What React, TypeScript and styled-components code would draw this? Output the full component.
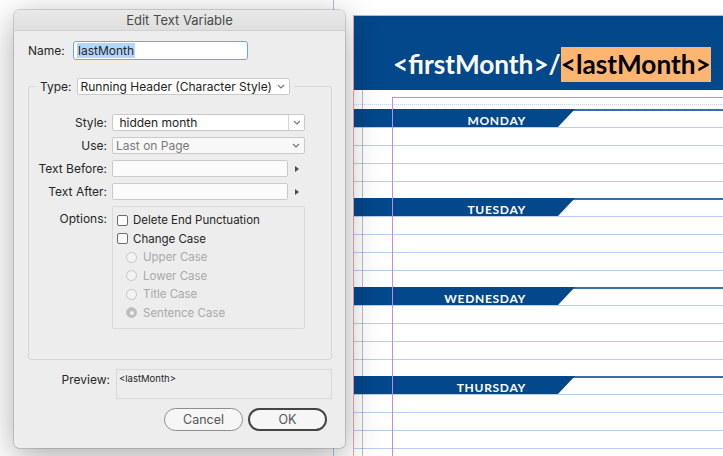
import React from 'react';
import styled, { createGlobalStyle, css } from 'styled-components';

const GlobalStyle = createGlobalStyle`
  html, body {
    margin: 0;
    padding: 0;
    background: #fff;
    overflow: hidden;
  }
  * {
    box-sizing: border-box;
  }
`;

const uiFont = `Inter, "Noto Sans", sans-serif`;
const docFont = `Lato, "Open Sans", sans-serif`;
const navy = '#03488b';

const Screen = styled.div`
  position: relative;
  width: 723px;
  height: 456px;
  overflow: hidden;
  background: #fff;
`;

/* ---------- document canvas ---------- */

const Pasteboard = styled.div`
  width: 100%;
  height: 100%;
  padding: 15px 0 0 353px;
`;

const Page = styled.div`
  width: 380px;
  height: 441px;
  border-top: 1px solid #f0a4b0;
  border-left: 1px solid #f0a4b0;
  background: #fff;
  font-family: ${docFont};
`;

const Header = styled.div`
  height: 74px;
  background: ${navy};
  display: flex;
  align-items: flex-end;
  padding: 0 0 8px 39px;
`;

const Title = styled.div`
  font-size: 26.2px;
  font-weight: 700;
  line-height: 35px;
  color: #fff;
  white-space: nowrap;
`;

const Highlight = styled.span`
  display: inline-block;
  background: #fdb671;
  color: #000;
`;

const Spacer = styled.div`
  height: 15px;
  margin-bottom: 4px;
  border-bottom: 1px dotted #c5d3ea;
`;

const DayBlock = styled.div`
  display: flex;
  flex-direction: column;
`;

const DayBar = styled.div`
  height: 19px;
  border-bottom: 1px solid #b9cdee;
  background: linear-gradient(#3a6cae, #3a6cae) top / 100% 2px no-repeat;
`;

const DayTab = styled.div`
  width: 221px;
  height: 18px;
  background: ${navy};
  clip-path: polygon(0 0, 100% 0, calc(100% - 17px) 100%, 0 100%);
  padding-right: 49px;
  text-align: right;
`;

const DayLabel = styled.span<{ $flagged?: boolean }>`
  font-size: 12px;
  font-weight: 700;
  letter-spacing: 0.7px;
  line-height: 17px;
  color: #fff;
  ${(p) =>
    p.$flagged &&
    css`
      text-decoration: underline;
      text-decoration-color: #d2263c;
      text-decoration-thickness: 1px;
      text-underline-offset: 2px;
    `}
`;

const Rule = styled.div<{ $last?: boolean }>`
  height: ${(p) => (p.$last ? '16px' : '18px')};
  border-bottom: ${(p) => (p.$last ? 'none' : '1px solid #b9cdee')};
`;

/* guides drawn over the layout */

const Guide = styled.div<{ $color: string }>`
  position: absolute;
  pointer-events: none;
  border: 0 solid ${(p) => p.$color};
`;

const MarginGuide = styled(Guide)`
  left: 362px;
  top: 23px;
  right: -20px;
  bottom: -20px;
  border-width: 1px 0 0 1px;
`;

const FrameGuide = styled(Guide)`
  left: 392px;
  top: 97px;
  right: -20px;
  bottom: -20px;
  border-width: 1px 0 0 1px;
`;

const ColumnGuide = styled(Guide)`
  left: 333px;
  top: 0;
  bottom: 0;
  border-width: 0 0 0 1px;
`;

/* ---------- dialog ---------- */

const Dialog = styled.div`
  position: absolute;
  left: 14px;
  top: 10px;
  width: 331px;
  height: 438px;
  background: #ededed;
  border-radius: 5px;
  box-shadow: 0 0 0 0.5px rgba(0, 0, 0, 0.28), 0 8px 34px rgba(0, 0, 0, 0.34);
  display: flex;
  flex-direction: column;
  overflow: hidden;
  font-family: ${uiFont};
  font-size: 11.5px;
  color: #262626;
`;

const TitleBar = styled.div`
  flex: none;
  height: 21px;
  background: linear-gradient(#e9e9e9, #dfdfdf);
  border-bottom: 1px solid #d0d0d0;
  display: flex;
  align-items: center;
  justify-content: center;
  font-size: 13px;
  color: #4a4a4a;
`;

const Body = styled.div`
  flex: 1;
  display: flex;
  flex-direction: column;
  padding: 10px 13px 15px 14px;
`;

const NameRow = styled.div`
  display: flex;
  align-items: center;
`;

const NameLabel = styled.span`
  width: 45px;
  font-size: 12px;
`;

const NameInput = styled.div`
  width: 175px;
  height: 19px;
  background: #fff;
  border: 1.5px solid #69a6ec;
  border-radius: 3px;
  display: flex;
  align-items: center;
  padding-left: 3px;
  font-size: 12px;
`;

const Selected = styled.span`
  background: #b4d6fe;
  padding: 0 1px;
`;

const Group = styled.fieldset`
  margin: 18px 0 0;
  padding: 19px 0 30px;
  border: 1px solid #d6d6d6;
  border-radius: 3px;
  min-width: 0;
`;

const Legend = styled.legend`
  margin-left: 6px;
  padding: 0 4px 0 5px;
  display: flex;
  align-items: center;
`;

const LegendLabel = styled.span`
  margin-right: 5px;
  font-size: 12px;
`;

const FieldGrid = styled.div`
  display: grid;
  grid-template-columns: 78px 193px;
  column-gap: 5px;
  row-gap: 6px;
`;

const FieldLabel = styled.span<{ $top?: boolean }>`
  text-align: right;
  line-height: 17px;
  padding-top: ${(p) => (p.$top ? '4px' : '0')};
  white-space: nowrap;
  font-size: 12px;
`;

const Select = styled.div<{ $width?: number; $muted?: boolean }>`
  width: ${(p) => (p.$width ? `${p.$width}px` : '100%')};
  height: 17px;
  display: flex;
  align-items: center;
  background: ${(p) => (p.$muted ? '#f8f8f8' : '#fff')};
  border: 1px solid #c9c9c9;
  border-radius: 2px;
  color: ${(p) => (p.$muted ? '#7a7a7a' : '#222')};
  font-size: 12px;
`;

const SelectText = styled.span`
  flex: 1;
  padding-left: 3px;
  white-space: nowrap;
  overflow: hidden;
`;

const ChevronBox = styled.span<{ $split?: boolean }>`
  width: 16px;
  height: 100%;
  display: flex;
  align-items: center;
  justify-content: center;
  border-left: ${(p) => (p.$split ? '1px solid #d4d4d4' : 'none')};
`;

const InputRow = styled.div`
  display: flex;
  align-items: center;
`;

const TextInput = styled.div`
  width: 176px;
  height: 17px;
  background: #fbfbfb;
  border: 1px solid #cbcbcb;
  border-radius: 2px;
`;

const Arrow = styled.span`
  margin-left: 7px;
  width: 0;
  height: 0;
  border-top: 3.5px solid transparent;
  border-bottom: 3.5px solid transparent;
  border-left: 4px solid #4d4d4d;
`;

const OptionsBox = styled.div`
  height: 123px;
  border: 1px solid #d9d9d9;
  border-radius: 2px;
  padding: 4px 0 0 4px;
  display: flex;
  flex-direction: column;
`;

const OptionRow = styled.div<{ $indent?: boolean; $disabled?: boolean }>`
  height: 18.5px;
  display: flex;
  align-items: center;
  gap: ${(p) => (p.$indent ? '6px' : '5px')};
  padding-left: ${(p) => (p.$indent ? '9px' : '0')};
  color: ${(p) => (p.$disabled ? '#a9a9a9' : '#262626')};
  font-size: 11.5px;
`;

const Checkbox = styled.span`
  width: 11px;
  height: 11px;
  border: 1px solid #6c6c6c;
  border-radius: 2px;
  background: #fbfbfb;
`;

const Radio = styled.span<{ $on?: boolean }>`
  width: 11px;
  height: 11px;
  border-radius: 50%;
  border: 1px solid #c3c3c3;
  background: ${(p) => (p.$on ? '#bdbdbd' : '#f3f3f3')};
  display: flex;
  align-items: center;
  justify-content: center;
  &::after {
    content: '';
    width: 4px;
    height: 4px;
    border-radius: 50%;
    background: ${(p) => (p.$on ? '#f2f2f2' : 'transparent')};
  }
`;

const PreviewRow = styled.div`
  margin-top: 9px;
  display: flex;
`;

const PreviewLabel = styled.span`
  width: 82px;
  margin-right: 6px;
  text-align: right;
  padding-top: 3px;
  font-size: 12px;
`;

const PreviewBox = styled.div`
  width: 216px;
  height: 30px;
  border: 1px solid #d8d8d8;
  padding: 3px 2px;
  font-size: 9.5px;
  color: #1e1e1e;
`;

const ButtonRow = styled.div`
  margin-top: 9px;
  padding-right: 5px;
  display: flex;
  justify-content: flex-end;
  gap: 5px;
`;

const Button = styled.button<{ $default?: boolean }>`
  width: 79px;
  height: 23px;
  border-radius: 12px;
  background: #f6f6f6;
  font-family: ${uiFont};
  font-size: 12.5px;
  color: #555;
  border: ${(p) => (p.$default ? '2px solid #454545' : '1px solid #8e8e8e')};
  padding: 0;
`;

const Chevron: React.FC = () => (
  <svg width="8" height="5" viewBox="0 0 8 5">
    <path d="M1 1 L4 4 L7 1" fill="none" stroke="#747474" strokeWidth="1.1" />
  </svg>
);

const days = [
  { name: 'MONDAY', flagged: false },
  { name: 'TUESDAY', flagged: true },
  { name: 'WEDNESDAY', flagged: true },
  { name: 'THURSDAY', flagged: true },
];

export default function App() {
  return (
    <>
      <GlobalStyle />
      <Screen>
        <Pasteboard>
          <Page>
            <Header>
              <Title>
                &lt;firstMonth&gt;/<Highlight>&lt;lastMonth&gt;</Highlight>
              </Title>
            </Header>
            <Spacer />
            {days.map((d) => (
              <DayBlock key={d.name}>
                <DayBar>
                  <DayTab>
                    <DayLabel $flagged={d.flagged}>{d.name}</DayLabel>
                  </DayTab>
                </DayBar>
                <Rule />
                <Rule />
                <Rule />
                <Rule $last />
              </DayBlock>
            ))}
          </Page>
        </Pasteboard>

        <ColumnGuide $color="#a9c3e8" />
        <MarginGuide $color="rgba(40, 50, 90, 0.32)" />
        <FrameGuide $color="#c08ae6" />

        <Dialog>
          <TitleBar>Edit Text Variable</TitleBar>
          <Body>
            <NameRow>
              <NameLabel>Name:</NameLabel>
              <NameInput>
                <Selected>lastMonth</Selected>
              </NameInput>
            </NameRow>

            <Group>
              <Legend>
                <LegendLabel>Type:</LegendLabel>
                <Select $width={213}>
                  <SelectText>Running Header (Character Style)</SelectText>
                  <ChevronBox>
                    <Chevron />
                  </ChevronBox>
                </Select>
              </Legend>

              <FieldGrid>
                <FieldLabel>Style:</FieldLabel>
                <Select>
                  <SelectText>&nbsp;hidden month</SelectText>
                  <ChevronBox $split>
                    <Chevron />
                  </ChevronBox>
                </Select>

                <FieldLabel>Use:</FieldLabel>
                <Select $muted>
                  <SelectText>Last on Page</SelectText>
                  <ChevronBox>
                    <Chevron />
                  </ChevronBox>
                </Select>

                <FieldLabel>Text Before:</FieldLabel>
                <InputRow>
                  <TextInput />
                  <Arrow />
                </InputRow>

                <FieldLabel>Text After:</FieldLabel>
                <InputRow>
                  <TextInput />
                  <Arrow />
                </InputRow>

                <FieldLabel $top>Options:</FieldLabel>
                <OptionsBox>
                  <OptionRow>
                    <Checkbox />
                    Delete End Punctuation
                  </OptionRow>
                  <OptionRow>
                    <Checkbox />
                    Change Case
                  </OptionRow>
                  <OptionRow $indent $disabled>
                    <Radio />
                    Upper Case
                  </OptionRow>
                  <OptionRow $indent $disabled>
                    <Radio />
                    Lower Case
                  </OptionRow>
                  <OptionRow $indent $disabled>
                    <Radio />
                    Title Case
                  </OptionRow>
                  <OptionRow $indent $disabled>
                    <Radio $on />
                    Sentence Case
                  </OptionRow>
                </OptionsBox>
              </FieldGrid>
            </Group>

            <PreviewRow>
              <PreviewLabel>Preview:</PreviewLabel>
              <PreviewBox>&lt;lastMonth&gt;</PreviewBox>
            </PreviewRow>

            <ButtonRow>
              <Button>Cancel</Button>
              <Button $default>OK</Button>
            </ButtonRow>
          </Body>
        </Dialog>
      </Screen>
    </>
  );
}
